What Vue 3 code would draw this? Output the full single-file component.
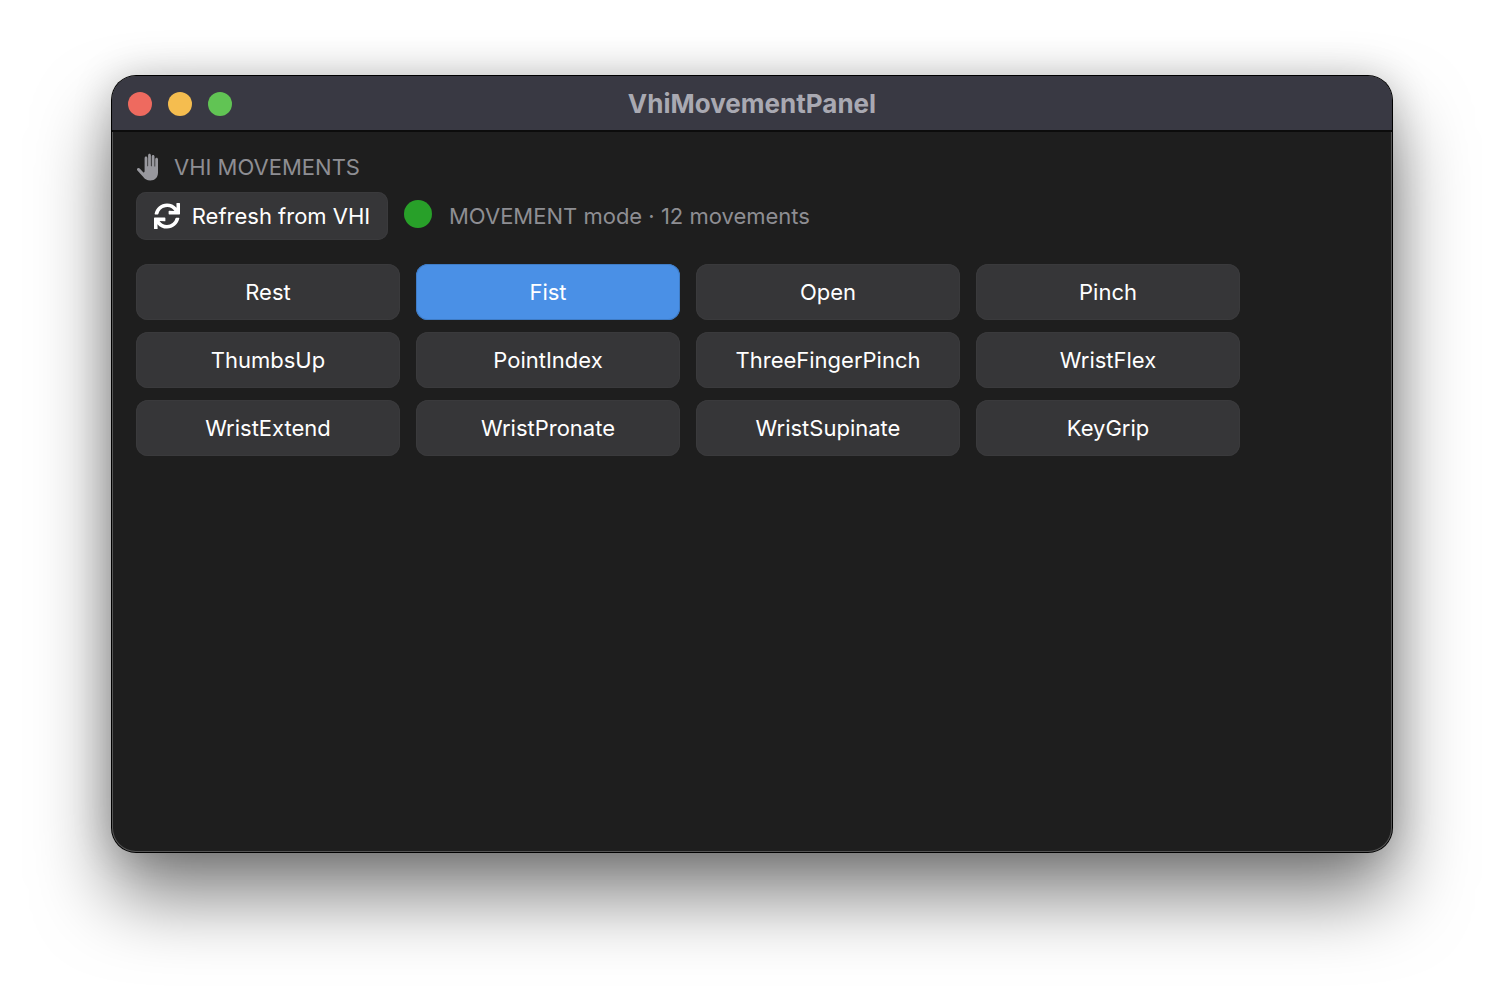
<template>
  <div class="page">
    <div class="window">
      <div class="titlebar">
        <div class="lights">
          <span class="light red"></span>
          <span class="light yellow"></span>
          <span class="light green"></span>
        </div>
        <div class="title">VhiMovementPanel</div>
      </div>
      <div class="content">
        <div class="heading">
          <svg class="hand" viewBox="0 0 28 28" width="28" height="28">
            <path fill="#98989e" d="M8.6 5.2c0-1 .6-1.7 1.4-1.7s1.4.7 1.4 1.7v8h.7V2.4c0-1 .6-1.7 1.4-1.7s1.4.7 1.4 1.7v10.8h.8V3.6c0-1 .6-1.7 1.4-1.7s1.4.7 1.4 1.7v10h.7V6.4c0-1 .6-1.7 1.4-1.7s1.4.7 1.4 1.7v13.2c0 4.8-3 8-7.7 8-3.4 0-5.3-1.3-7.2-3.8L1.4 17.6c-.6-.8-.5-1.8.2-2.3.8-.6 1.7-.3 2.4.5l3.2 3.4c.5.4 1.4.2 1.4-.6z" />
          </svg>
          <span>VHI MOVEMENTS</span>
        </div>
        <div class="toolbar">
          <button class="refresh">
            <svg viewBox="0 0 512 512" width="26" height="26">
              <path fill="#fff" d="M440.65 12.57l4 82.77A247.16 247.16 0 0 0 255.83 8C134.73 8 33.91 94.92 12.29 209.82A12 12 0 0 0 24.09 224h49.05a12 12 0 0 0 11.67-9.26 175.91 175.91 0 0 1 317-56.94l-101.46-4.86a12 12 0 0 0-12.57 12v47.41a12 12 0 0 0 12 12H500a12 12 0 0 0 12-12V12a12 12 0 0 0-12-12h-47.37a12 12 0 0 0-11.98 12.57zM255.83 432a175.61 175.61 0 0 1-146-77.8l101.8 4.87a12 12 0 0 0 12.57-12v-47.4a12 12 0 0 0-12-12H12a12 12 0 0 0-12 12V500a12 12 0 0 0 12 12h47.35a12 12 0 0 0 12-12.6l-4.15-82.57A247.17 247.17 0 0 0 255.83 504c121.11 0 221.93-86.92 243.55-201.82a12 12 0 0 0-11.8-14.18h-49.05a12 12 0 0 0-11.67 9.26A175.86 175.86 0 0 1 255.83 432z" />
            </svg>
            <span>Refresh from VHI</span>
          </button>
          <span class="status-dot"></span>
          <span class="status">MOVEMENT mode · {{ movements.length }} movements</span>
        </div>
        <div class="grid">
          <button
            v-for="m in movements"
            :key="m"
            class="move"
            :class="{ active: m === selected }"
            @click="selected = m"
          >{{ m }}</button>
        </div>
      </div>
    </div>
  </div>
</template>

<script setup>
import { ref } from 'vue'

const movements = [
  'Rest', 'Fist', 'Open', 'Pinch',
  'ThumbsUp', 'PointIndex', 'ThreeFingerPinch', 'WristFlex',
  'WristExtend', 'WristPronate', 'WristSupinate', 'KeyGrip'
]

const selected = ref('Fist')
</script>

<style>
html, body {
  margin: 0;
  background: #fff;
}
</style>

<style scoped>
.page {
  width: 1504px;
  height: 1000px;
  padding: 76px 112px 148px;
  box-sizing: border-box;
  overflow: hidden;
  font-family: Inter, "Liberation Sans", sans-serif;
}

.window {
  height: 776px;
  border-radius: 24px;
  background: #1e1e1e;
  overflow: hidden;
  box-shadow:
    0 0 0 1px #000,
    inset 0 0 0 1px #555,
    0 44px 76px rgba(0, 0, 0, 0.5),
    0 0 40px rgba(0, 0, 0, 0.2);
  position: relative;
}

.titlebar {
  height: 56px;
  background: #393943;
  border-bottom: 2px solid #0c0c0c;
  box-sizing: border-box;
  display: flex;
  align-items: center;
  justify-content: center;
  position: relative;
}

.lights {
  position: absolute;
  left: 16px;
  top: 16px;
  display: flex;
  gap: 16px;
}

.light {
  width: 24px;
  height: 24px;
  border-radius: 50%;
}

.red { background: #ee6a5f; }
.yellow { background: #f5bd4f; }
.green { background: #61c454; }

.title {
  font-size: 26px;
  font-weight: 700;
  color: #a9a9b2;
}

.content {
  padding: 18px 24px 0;
}

.heading {
  display: flex;
  align-items: center;
  gap: 10px;
  height: 34px;
  font-size: 22px;
  color: #8e8e93;
}

.hand {
  flex: none;
}

.toolbar {
  display: flex;
  align-items: center;
  margin-top: 8px;
}

button {
  font-family: inherit;
  border: 0;
  padding: 0;
  cursor: pointer;
  color: #fff;
  background: #363638;
  box-shadow: inset 0 0 0 1px #3a3a3c;
}

.refresh {
  width: 252px;
  height: 48px;
  border-radius: 10px;
  display: flex;
  align-items: center;
  justify-content: center;
  gap: 12px;
  font-size: 22px;
}

.status-dot {
  width: 28px;
  height: 28px;
  border-radius: 50%;
  background: #28a029;
  margin-left: 16px;
  margin-top: -4px;
}

.status {
  margin-left: 17px;
  font-size: 22px;
  color: #8e8e93;
}

.grid {
  display: grid;
  grid-template-columns: repeat(4, 264px);
  column-gap: 16px;
  row-gap: 12px;
  margin-top: 24px;
}

.move {
  height: 56px;
  border-radius: 12px;
  font-size: 22px;
}

.move.active {
  background: #4a90e6;
  box-shadow: inset 0 0 0 1px #3f7cc6;
}
</style>
